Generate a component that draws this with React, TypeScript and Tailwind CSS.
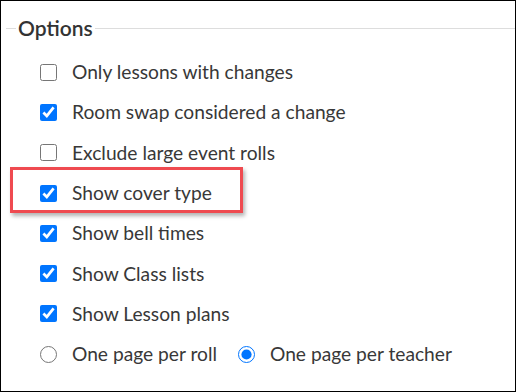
import React from "react";

const checks = [
  { label: "Only lessons with changes", checked: false },
  { label: "Room swap considered a change", checked: true },
  { label: "Exclude large event rolls", checked: false },
  { label: "Show cover type", checked: true, highlight: true },
  { label: "Show bell times", checked: true },
  { label: "Show Class lists", checked: true },
  { label: "Show Lesson plans", checked: true },
];

export default function App() {
  return (
    <div
      className="w-[516px] h-[392px] bg-white border border-black overflow-hidden text-[#383838]"
      style={{ fontFamily: "Lato, 'Open Sans', sans-serif" }}
    >
      <fieldset className="ml-[5px] mt-[15px] border-0 border-t border-[#ddd] p-0">
        <legend className="ml-[10px] px-[2px] text-[21px] leading-[24px] font-semibold text-[#333]">
          Options
        </legend>
        <div className="pl-[34px] pt-[12px]">
          {checks.map((c) => (
            <div key={c.label} className="relative flex items-center h-[40.3px]">
              {c.highlight && (
                <div className="absolute left-[-30px] w-[233px] top-[-6px] h-[46px] border-[3px] border-[#ef4a50] shadow-[2px_3px_4px_rgba(0,0,0,0.3)]" />
              )}
              <input
                type="checkbox"
                defaultChecked={c.checked}
                className="w-[17px] h-[17px] m-0 accent-[#0075ff]"
              />
              <span className="ml-[15px] text-[19.2px] leading-[22px]">{c.label}</span>
            </div>
          ))}
          <div className="flex items-center h-[40.3px]">
            <input type="radio" name="page" className="w-[17px] h-[17px] m-0 accent-[#0075ff]" />
            <span className="ml-[15px] text-[19.2px] leading-[22px]">One page per roll</span>
            <input
              type="radio"
              name="page"
              defaultChecked
              className="ml-[21px] w-[17px] h-[17px] m-0 accent-[#0075ff]"
            />
            <span className="ml-[15px] text-[19.2px] leading-[22px]">One page per teacher</span>
          </div>
        </div>
      </fieldset>
    </div>
  );
}
